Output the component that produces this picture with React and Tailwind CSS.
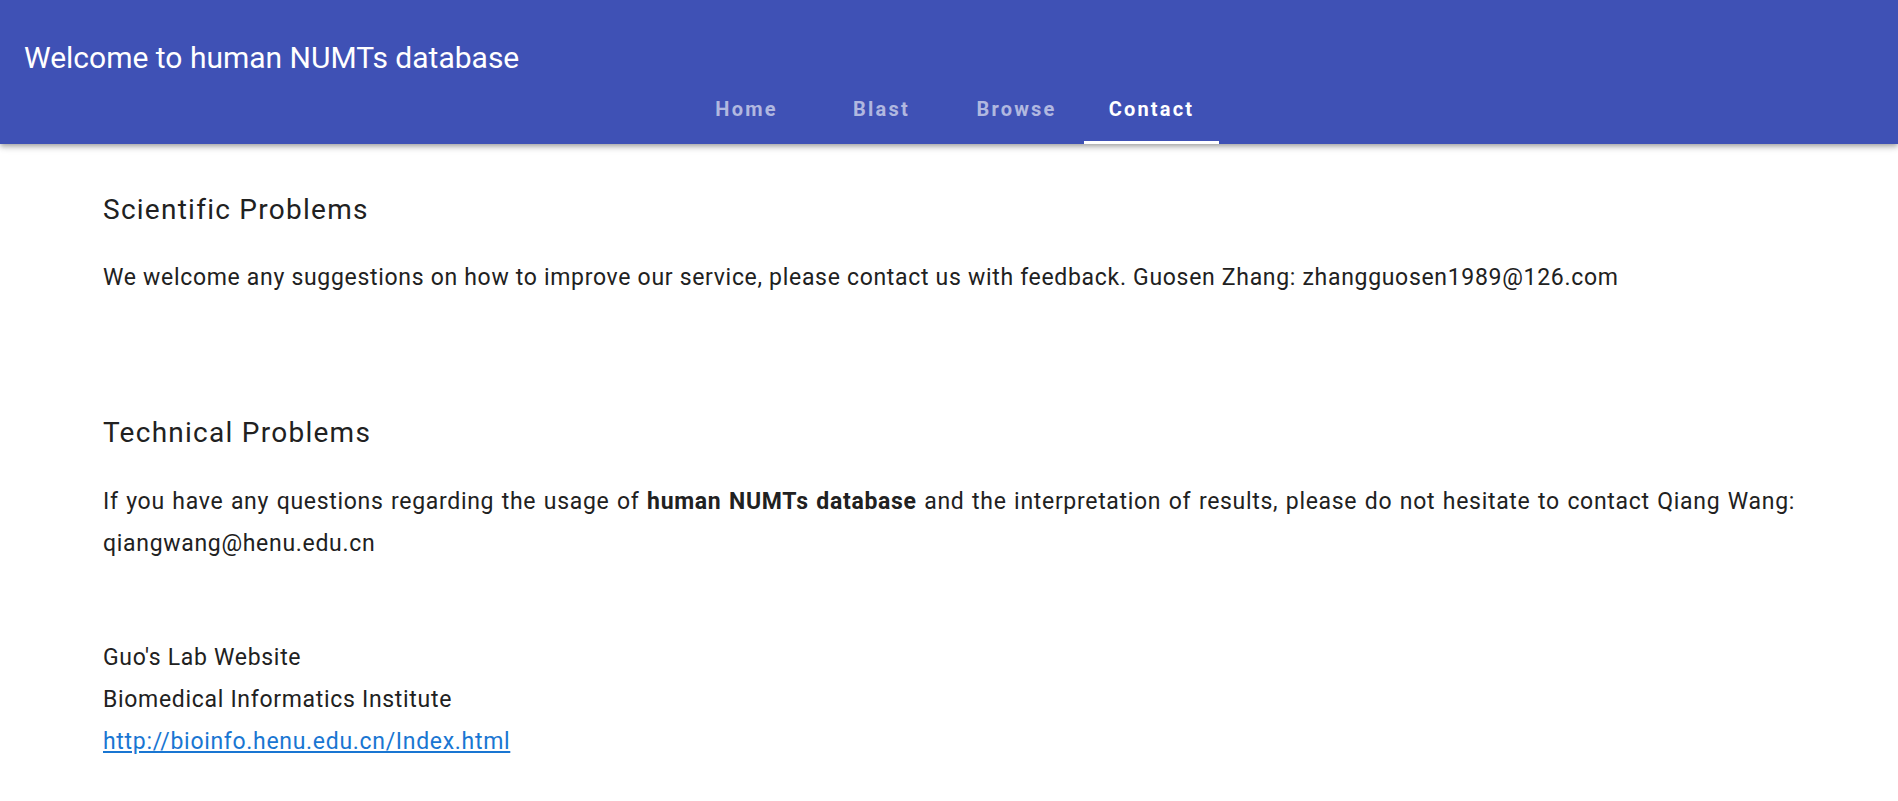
export default function App() {
  const tabs = ["Home", "Blast", "Browse", "Contact"];
  const active = "Contact";
  return (
    <div className="min-h-screen bg-white font-['Roboto',sans-serif] text-[#212121]">
      {/* HEADER */}
      <header className="relative z-10 bg-[#3f51b5] text-white shadow-[0_2px_4px_-1px_rgba(0,0,0,0.2),0_4px_5px_0_rgba(0,0,0,0.14),0_1px_10px_0_rgba(0,0,0,0.12)]">
        <div className="h-[84px] pt-[40px] pl-[24px]">
          <div className="text-[30px] leading-[36px]">Welcome to human NUMTs database</div>
        </div>
        <nav className="flex h-[60px] justify-center">
          {tabs.map((t) => (
            <button
              key={t}
              className={
                t === active
                  ? "flex w-[135px] items-start justify-center pt-[13px] border-b-[3px] border-white text-[20px] leading-[24px] font-bold tracking-[0.11em] text-white"
                  : "flex w-[135px] items-start justify-center pt-[13px] border-b-[3px] border-transparent text-[20px] leading-[24px] font-bold tracking-[0.11em] text-white/60"
              }
            >
              {t}
            </button>
          ))}
        </nav>
      </header>

      {/* CONTENT */}
      <main className="px-[103px] pt-[50px] pb-10">
        <h2 className="text-[28px] leading-[32px] tracking-[0.045em]">Scientific Problems</h2>
        <p className="mt-[31px] text-justify text-[23px] leading-[42px] tracking-[0.03em]">
          We welcome any suggestions on how to improve our service, please contact us with feedback. Guosen Zhang: zhangguosen1989@126.com
        </p>

        <h2 className="mt-[118px] text-[28px] leading-[32px] tracking-[0.045em]">Technical Problems</h2>
        <p className="mt-[32px] text-justify text-[23px] leading-[42px] tracking-[0.03em]">
          If you have any questions regarding the usage of <b>human NUMTs database</b> and the interpretation of results, please do not hesitate to contact Qiang Wang: qiangwang@henu.edu.cn
        </p>

        <div className="mt-[72px] text-[23px] leading-[42px] tracking-[0.03em]">
          <div>Guo's Lab Website</div>
          <div>Biomedical Informatics Institute</div>
          <a href="#" className="text-[#1976d2] underline">
            http://bioinfo.henu.edu.cn/Index.html
          </a>
        </div>
      </main>
    </div>
  );
}
